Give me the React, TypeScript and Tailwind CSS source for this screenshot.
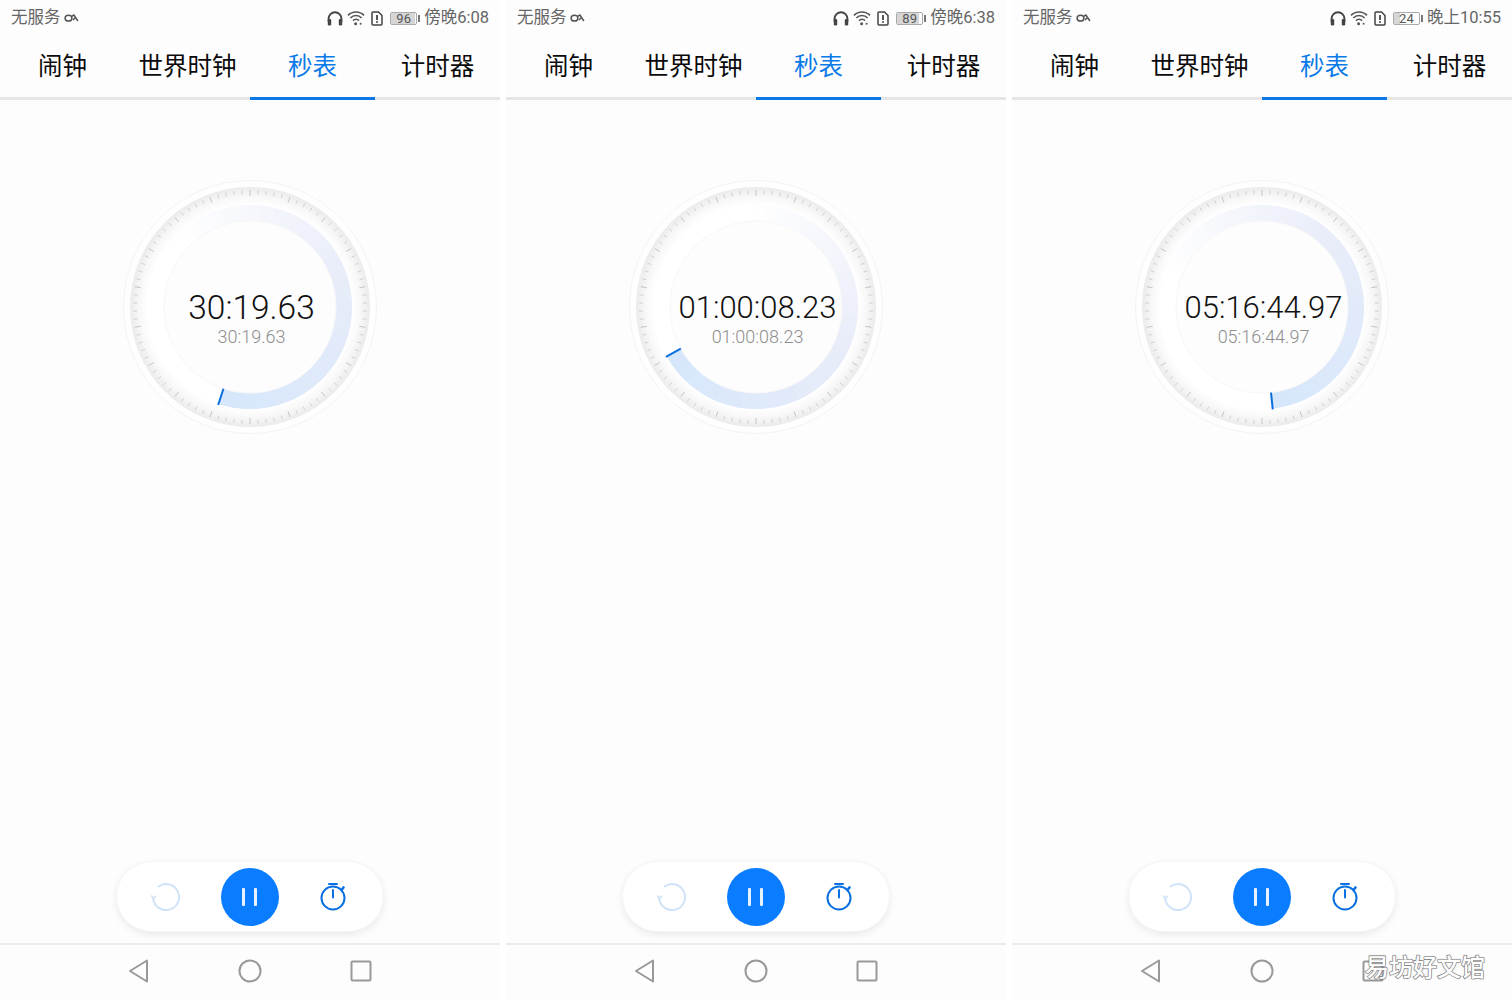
import React from 'react';

const FONT = 'font-[Roboto,"Noto_Sans_CJK_SC",sans-serif]';

interface PanelData {
  time: string;
  timeSize: string;
  sub: string;
  clock: string;
  battery: number;
  angle: number;
}

const PANELS: PanelData[] = [
  { time: '30:19.63', timeSize: 'text-[33.5px]', sub: '30:19.63', clock: '傍晚6:08', battery: 96, angle: 198 },
  { time: '01:00:08.23', timeSize: 'text-[31px]', sub: '01:00:08.23', clock: '傍晚6:38', battery: 89, angle: 241 },
  { time: '05:16:44.97', timeSize: 'text-[31px]', sub: '05:16:44.97', clock: '晚上10:55', battery: 24, angle: 174 },
];

const TABS = ['闹钟', '世界时钟', '秒表', '计时器'];

// clockwise degrees from 12 o'clock, around the dial centre
const polar = (r: number, deg: number) => {
  const a = ((deg - 90) * Math.PI) / 180;
  return { x: 130 + r * Math.cos(a), y: 130 + r * Math.sin(a) };
};

const mix = (a: number[], b: number[], t: number) =>
  a.map((v, i) => Math.round(v + (b[i] - v) * t));

// band colour: faded tail, lavender middle, light blue head
const bandColor = (t: number) => {
  const tail = [255, 255, 255];
  const mid = [232, 236, 249];
  const head = [214, 231, 251];
  const c = t < 0.5 ? mix(tail, mid, t / 0.5) : mix(mid, head, (t - 0.5) / 0.5);
  return `rgb(${c[0]},${c[1]},${c[2]})`;
};

const Dial = ({ angle }: { angle: number }) => {
  const ticks = Array.from({ length: 90 }, (_, i) => i * 4);
  const span = 245;
  const segments = Array.from({ length: Math.ceil(span / 2) }, (_, i) => i * 2);
  const head1 = polar(86, angle);
  const head2 = polar(103, angle);

  return (
    <svg width="260" height="260" viewBox="0 0 260 260">
      <defs>
        <radialGradient id="rim" cx="50%" cy="50%" r="50%">
          <stop offset="85%" stopColor="#ffffff" />
          <stop offset="92%" stopColor="#f8f8f8" />
          <stop offset="100%" stopColor="#ebebeb" />
        </radialGradient>
      </defs>
      <circle cx="130" cy="130" r="126.5" fill="#fefefe" stroke="#f4f4f4" strokeWidth="1" />
      <circle cx="130" cy="130" r="120" fill="url(#rim)" />
      {ticks.map((d) => {
        const big = d % 20 === 0;
        const a = polar(big ? 111 : 113, d);
        const b = polar(117, d);
        return (
          <line key={d} x1={a.x} y1={a.y} x2={b.x} y2={b.y} stroke={big ? '#b8b8b8' : '#c8c8c8'} strokeWidth="0.8" />
        );
      })}
      {segments.map((s) => {
        // s runs back from the head of the band to its faded tail
        const t = 1 - s / span;
        const from = polar(94, angle - s);
        const to = polar(94, angle - s - 2.6);
        return (
          <path
            key={s}
            d={`M${from.x} ${from.y}A94 94 0 0 0 ${to.x} ${to.y}`}
            fill="none"
            stroke={bandColor(t)}
            strokeWidth="16"
          />
        );
      })}
      <circle cx="130" cy="130" r="86" fill="#fdfdfd" stroke="#f7f7f7" strokeWidth="1" />
      <line x1={head1.x} y1={head1.y} x2={head2.x} y2={head2.y} stroke="#0a6fe0" strokeWidth="2" />
    </svg>
  );
};

const StatusBar = ({ clock, battery }: { clock: string; battery: number }) => (
  <div className="flex h-[36px] items-center justify-between px-[11px] text-[16.5px] text-[#666666]">
    <div className="flex items-center gap-[3px]">
      <span>无服务</span>
      <svg width="15" height="10" viewBox="0 0 15 10" fill="none" stroke="#555" strokeWidth="1.5">
        <ellipse cx="4.5" cy="5.2" rx="3.4" ry="2.9" />
        <path d="M7.5 3.4l2.4-1.4 4 6M9 7l2-2" />
      </svg>
    </div>
    <div className="flex items-center">
      <svg width="16" height="15" viewBox="0 0 16 15" fill="none" stroke="#444" strokeWidth="1.9">
        <path d="M1.6 11V7.6a6.4 6.4 0 0 1 12.8 0V11" />
        <rect x="0.8" y="8" width="3.4" height="6.5" rx="1.2" fill="#444" stroke="none" />
        <rect x="11.8" y="8" width="3.4" height="6.5" rx="1.2" fill="#444" stroke="none" />
      </svg>
      <svg className="ml-[4px]" width="18" height="15" viewBox="0 0 18 15" fill="none" stroke="#555" strokeWidth="1.6">
        <path d="M1 4.4a11 11 0 0 1 16 0M3.4 7a7.6 7.6 0 0 1 11.2 0M6 9.6a4 4 0 0 1 6 0" />
        <circle cx="8.6" cy="12.8" r="1.5" fill="#555" stroke="none" />
        <circle cx="13.6" cy="12.8" r="1" fill="#555" stroke="none" />
      </svg>
      <svg className="ml-[6px]" width="12" height="15" viewBox="0 0 12 15" fill="none" stroke="#444" strokeWidth="1.5">
        <path d="M1 2a1 1 0 0 1 1-1h5.5L11 4.5V13a1 1 0 0 1-1 1H2a1 1 0 0 1-1-1z" />
        <path d="M6 4v5" strokeWidth="1.8" />
        <circle cx="6" cy="11" r="1" fill="#444" stroke="none" />
      </svg>
      <div className="ml-[7px] flex items-center gap-[1px]">
        <div className="relative flex h-[13px] w-[27px] items-center justify-center overflow-hidden rounded-[2px] border border-[#aaaaaa] text-[13px] leading-none text-[#555555]">
          <div
            className="absolute inset-y-0 left-0 bg-[#d6d6d6]"
            style={{ width: `${battery}%` }}
          />
          <span className="relative">{battery}</span>
        </div>
        <div className="h-[7px] w-[2px] bg-[#777777]" />
      </div>
      <span className="ml-[4px]">{clock}</span>
    </div>
  </div>
);

const TabBar = () => (
  <div className="flex h-[64px] border-b-[3px] border-[#e6e6e6]">
    {TABS.map((tab) => {
      const active = tab === '秒表';
      return (
        <div
          key={tab}
          className={`relative flex w-[125px] items-center justify-center pt-[2px] text-[24.5px] ${active ? 'text-[#0a7ae8]' : 'text-[#0a0a0a]'}`}
        >
          {tab}
          {active && <div className="absolute inset-x-0 bottom-[-3px] h-[3px] bg-[#0a78e8]" />}
        </div>
      );
    })}
  </div>
);

const Controls = () => (
  <div className="flex h-[69px] w-[266px] items-center justify-between rounded-full bg-white pl-[33px] pr-[34px] shadow-[0_3px_8px_rgba(0,0,0,0.09)] ring-1 ring-[#f5f5f5]">
    <svg width="32" height="32" viewBox="0 0 32 32" fill="none" stroke="#cfe2f8" strokeWidth="2" strokeLinecap="round">
      <path d="M8.5 5.5A13 13 0 1 1 3.1 17" />
      <path d="M1.6 15l1.7 2.4 2.2-2" strokeWidth="1.6" />
    </svg>
    <div className="flex h-[58px] w-[58px] items-center justify-center gap-[9px] rounded-full bg-[#0a7cff]">
      <div className="h-[18px] w-[3px] rounded-[1px] bg-[#e8f2ff]" />
      <div className="h-[18px] w-[3px] rounded-[1px] bg-[#e8f2ff]" />
    </div>
    <svg width="32" height="32" viewBox="0 0 32 32" fill="none" stroke="#0a6fe0" strokeWidth="2" strokeLinecap="round">
      <circle cx="16" cy="17" r="11.5" />
      <path d="M12 3h8" />
      <path d="M16 9v7.5" />
      <path d="M26.5 6.5l-2 2.5" strokeWidth="2.6" />
    </svg>
  </div>
);

const NavBar = () => (
  <div className="flex h-[57px] items-center justify-between border-t-[2px] border-[#ececec] px-[127px] pb-[3px]">
    <svg width="24" height="26" viewBox="0 0 24 26" fill="none" stroke="#999" strokeWidth="2" strokeLinejoin="round">
      <path d="M20 2.5v21L3 13z" />
    </svg>
    <svg width="24" height="24" viewBox="0 0 24 24" fill="none" stroke="#999" strokeWidth="2">
      <circle cx="12" cy="12" r="10.5" />
    </svg>
    <svg width="24" height="24" viewBox="0 0 24 24" fill="none" stroke="#999" strokeWidth="2">
      <rect x="2.5" y="2.5" width="19" height="19" rx="1" />
    </svg>
  </div>
);

const Panel = ({ data }: { data: PanelData }) => (
  <div className="flex h-[1000px] w-[500px] flex-col bg-[#fdfdfd]">
    <StatusBar clock={data.clock} battery={data.battery} />
    <TabBar />
    <div className="flex flex-1 flex-col items-center justify-between pb-[12px] pt-[77px]">
      <div className="relative h-[260px] w-[260px]">
        <Dial angle={data.angle} />
        <div className="absolute inset-0 flex flex-col items-center pl-[3px] pt-[110px]">
          <div className={`${data.timeSize} font-light leading-[41px] text-[#111111]`}>{data.time}</div>
          <div className="text-[18px] font-light leading-[18px] text-[#8e8e8e]">{data.sub}</div>
        </div>
      </div>
      <Controls />
    </div>
    <NavBar />
  </div>
);

export default function App() {
  return (
    <div className={`relative flex h-[1000px] w-[1512px] gap-[6px] overflow-hidden bg-white ${FONT}`}>
      {PANELS.map((p) => (
        <Panel key={p.clock} data={p} />
      ))}
      <div className="absolute left-[1365px] top-[952px] text-[24px] font-medium leading-[32px] text-white [-webkit-text-stroke:1.2px_#666666] [paint-order:stroke_fill] [text-shadow:0_0_2px_#999999]">
        易坊好文馆
      </div>
    </div>
  );
}
